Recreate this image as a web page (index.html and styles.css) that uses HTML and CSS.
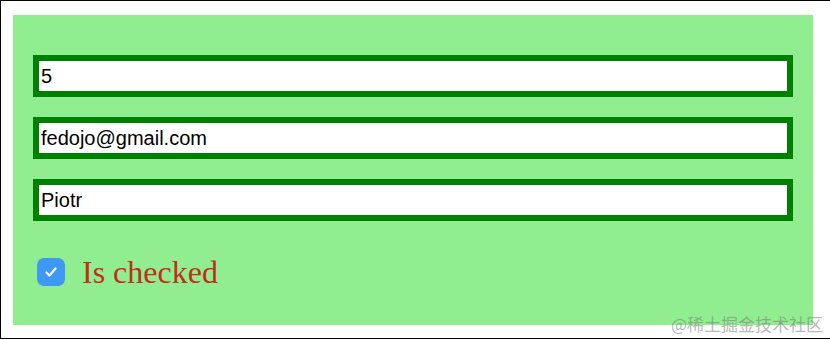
FILE: index.html
```html
<!DOCTYPE html>
<html>
  <head>
    <title>Form</title>
    <link rel="stylesheet" href="styles.css">
  </head>
  <body>
    <div class="frame">
      <form class="card">
        <input class="field" type="text" value="5">
        <input class="field" type="text" value="fedojo@gmail.com">
        <input class="field" type="text" value="Piotr">

        <label class="check-row">
          <span class="check-box">
            <svg width="16" height="16" viewBox="0 0 16 16">
              <path d="M3.5 8.5 L6.5 11.5 L12.5 4.5" fill="none" stroke="white" stroke-width="2.2" stroke-linecap="round" stroke-linejoin="round"/>
            </svg>
          </span>
          <span class="check-label">Is checked</span>
        </label>
      </form>

      <div class="watermark">@稀土掘金技术社区</div>
    </div>
  </body>
</html>
```

FILE: styles.css
```css
body{
  margin: 0;
  background-color: white;
}

.frame{
  position: relative;
  width: 830px;
  height: 339px;
  border-top: 1px solid black;
  border-left: 1px solid black;
  border-bottom: 1px solid black;
  padding: 14px 0 0 12px;
  box-sizing: border-box;
}

.card{
  width: 800px;
  height: 310px;
  box-sizing: border-box;
  background-color: lightgreen;
  padding: 40px 20px 0 20px;
  display: flex;
  flex-direction: column;
  gap: 20px;
  margin: 0;
}

.field{
  height: 42px;
  border: 6px solid green;
  box-sizing: border-box;
  padding: 0 2px;
  margin: 0;
  font-family: "Liberation Sans", Arial, sans-serif;
  font-size: 20px;
  color: black;
  background-color: white;
  outline: none;
}

.check-row{
  display: flex;
  align-items: center;
  margin-top: 16px;
  padding-left: 4px;
  height: 30px;
}

.check-box{
  width: 28px;
  height: 28px;
  border-radius: 7px;
  background-color: #3d99f5;
  display: flex;
  align-items: center;
  justify-content: center;
  margin-right: 17px;
}

.check-label{
  font-family: "Liberation Serif", "Times New Roman", serif;
  font-size: 32px;
  color: #c32e18;
  line-height: 30px;
}

.watermark{
  position: absolute;
  right: 7px;
  bottom: 2px;
  font-family: "Noto Sans CJK SC", sans-serif;
  font-size: 17px;
  color: rgba(120, 120, 120, 0.55);
}
```
